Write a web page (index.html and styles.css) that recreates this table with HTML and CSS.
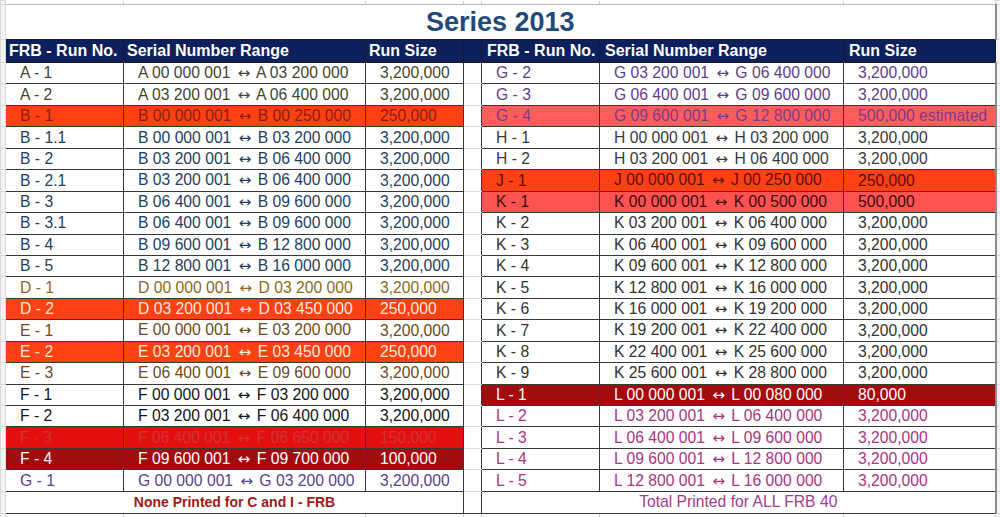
FILE: index.html
```html
<!DOCTYPE html>
<html>
<head>
<meta charset="utf-8">
<link rel="stylesheet" href="styles.css">
</head>
<body>
<table class="sheet">
<colgroup>
<col class="c-lead"><col class="c-run"><col class="c-range"><col class="c-size"><col class="c-gap"><col class="c-run2"><col class="c-range2"><col class="c-size2"><col class="c-trail">
</colgroup>
<tbody>
<tr class="grid-top"><td class="edge"></td><td class="gl"></td><td class="gl"></td><td class="gl"></td><td class="gl"></td><td class="gl"></td><td class="gl"></td><td class="gl"></td><td class="edge"></td></tr>
<tr class="title-row"><td class="edge"></td><td class="title" colspan="7">Series 2013</td><td class="edge"></td></tr>
<tr class="head"><td class="edge"></td><td>FRB - Run No.</td><td>Serial Number Range</td><td>Run Size</td><td class="hgap"></td><td class="r1">FRB - Run No.</td><td class="r1">Serial Number Range</td><td class="r1">Run Size</td><td class="edge"></td></tr>

<tr class="row"><td class="edge"></td><td class="t-a">A - 1</td><td class="t-a">A 00 000 001 <span class="arr">↔</span> A 03 200 000</td><td class="t-a">3,200,000</td><td class="gap"></td><td class="t-g">G - 2</td><td class="t-g">G 03 200 001 <span class="arr">↔</span> G 06 400 000</td><td class="t-g">3,200,000</td><td class="edge"></td></tr>
<tr class="row"><td class="edge"></td><td class="t-a">A - 2</td><td class="t-a">A 03 200 001 <span class="arr">↔</span> A 06 400 000</td><td class="t-a">3,200,000</td><td class="gap"></td><td class="t-g">G - 3</td><td class="t-g">G 06 400 001 <span class="arr">↔</span> G 09 600 000</td><td class="t-g">3,200,000</td><td class="edge"></td></tr>
<tr class="row"><td class="edge"></td><td class="hl-orange t-dred">B - 1</td><td class="hl-orange t-dred">B 00 000 001 <span class="arr">↔</span> B 00 250 000</td><td class="hl-orange t-dred">250,000</td><td class="gap"></td><td class="hl-salmon t-gp">G - 4</td><td class="hl-salmon t-gp">G 09 600 001 <span class="arr">↔</span> G 12 800 000</td><td class="hl-salmon t-gp">500,000 estimated</td><td class="edge"></td></tr>
<tr class="row"><td class="edge"></td><td class="t-b">B - 1.1</td><td class="t-b">B 00 000 001 <span class="arr">↔</span> B 03 200 000</td><td class="t-b">3,200,000</td><td class="gap"></td><td class="t-h">H - 1</td><td class="t-h">H 00 000 001 <span class="arr">↔</span> H 03 200 000</td><td class="t-h">3,200,000</td><td class="edge"></td></tr>
<tr class="row"><td class="edge"></td><td class="t-b">B - 2</td><td class="t-b">B 03 200 001 <span class="arr">↔</span> B 06 400 000</td><td class="t-b">3,200,000</td><td class="gap"></td><td class="t-h">H - 2</td><td class="t-h">H 03 200 001 <span class="arr">↔</span> H 06 400 000</td><td class="t-h">3,200,000</td><td class="edge"></td></tr>
<tr class="row"><td class="edge"></td><td class="t-b">B - 2.1</td><td class="t-b">B 03 200 001 <span class="arr">↔</span> B 06 400 000</td><td class="t-b">3,200,000</td><td class="gap"></td><td class="hl-orange t-jd">J - 1</td><td class="hl-orange t-jd">J 00 000 001 <span class="arr">↔</span> J 00 250 000</td><td class="hl-orange t-jd">250,000</td><td class="edge"></td></tr>
<tr class="row"><td class="edge"></td><td class="t-b">B - 3</td><td class="t-b">B 06 400 001 <span class="arr">↔</span> B 09 600 000</td><td class="t-b">3,200,000</td><td class="gap"></td><td class="hl-pink t-kd">K - 1</td><td class="hl-pink t-kd">K 00 000 001 <span class="arr">↔</span> K 00 500 000</td><td class="hl-pink t-kd">500,000</td><td class="edge"></td></tr>
<tr class="row"><td class="edge"></td><td class="t-b">B - 3.1</td><td class="t-b">B 06 400 001 <span class="arr">↔</span> B 09 600 000</td><td class="t-b">3,200,000</td><td class="gap"></td><td class="t-k">K - 2</td><td class="t-k">K 03 200 001 <span class="arr">↔</span> K 06 400 000</td><td class="t-k">3,200,000</td><td class="edge"></td></tr>
<tr class="row"><td class="edge"></td><td class="t-b">B - 4</td><td class="t-b">B 09 600 001 <span class="arr">↔</span> B 12 800 000</td><td class="t-b">3,200,000</td><td class="gap"></td><td class="t-k">K - 3</td><td class="t-k">K 06 400 001 <span class="arr">↔</span> K 09 600 000</td><td class="t-k">3,200,000</td><td class="edge"></td></tr>
<tr class="row"><td class="edge"></td><td class="t-b">B - 5</td><td class="t-b">B 12 800 001 <span class="arr">↔</span> B 16 000 000</td><td class="t-b">3,200,000</td><td class="gap"></td><td class="t-k">K - 4</td><td class="t-k">K 09 600 001 <span class="arr">↔</span> K 12 800 000</td><td class="t-k">3,200,000</td><td class="edge"></td></tr>
<tr class="row"><td class="edge"></td><td class="t-d">D - 1</td><td class="t-d">D 00 000 001 <span class="arr">↔</span> D 03 200 000</td><td class="t-d">3,200,000</td><td class="gap"></td><td class="t-k">K - 5</td><td class="t-k">K 12 800 001 <span class="arr">↔</span> K 16 000 000</td><td class="t-k">3,200,000</td><td class="edge"></td></tr>
<tr class="row"><td class="edge"></td><td class="hl-orange t-cream">D - 2</td><td class="hl-orange t-cream">D 03 200 001 <span class="arr">↔</span> D 03 450 000</td><td class="hl-orange t-cream">250,000</td><td class="gap"></td><td class="t-k">K - 6</td><td class="t-k">K 16 000 001 <span class="arr">↔</span> K 19 200 000</td><td class="t-k">3,200,000</td><td class="edge"></td></tr>
<tr class="row"><td class="edge"></td><td class="t-e">E - 1</td><td class="t-e">E 00 000 001 <span class="arr">↔</span> E 03 200 000</td><td class="t-e">3,200,000</td><td class="gap"></td><td class="t-k">K - 7</td><td class="t-k">K 19 200 001 <span class="arr">↔</span> K 22 400 000</td><td class="t-k">3,200,000</td><td class="edge"></td></tr>
<tr class="row"><td class="edge"></td><td class="hl-orange t-cream">E - 2</td><td class="hl-orange t-cream">E 03 200 001 <span class="arr">↔</span> E 03 450 000</td><td class="hl-orange t-cream">250,000</td><td class="gap"></td><td class="t-k">K - 8</td><td class="t-k">K 22 400 001 <span class="arr">↔</span> K 25 600 000</td><td class="t-k">3,200,000</td><td class="edge"></td></tr>
<tr class="row"><td class="edge"></td><td class="t-e">E - 3</td><td class="t-e">E 06 400 001 <span class="arr">↔</span> E 09 600 000</td><td class="t-e">3,200,000</td><td class="gap"></td><td class="t-k">K - 9</td><td class="t-k">K 25 600 001 <span class="arr">↔</span> K 28 800 000</td><td class="t-k">3,200,000</td><td class="edge"></td></tr>
<tr class="row"><td class="edge"></td><td class="t-f">F - 1</td><td class="t-f">F 00 000 001 <span class="arr">↔</span> F 03 200 000</td><td class="t-f">3,200,000</td><td class="gap"></td><td class="hl-maroon t-white">L - 1</td><td class="hl-maroon t-white">L 00 000 001 <span class="arr">↔</span> L 00 080 000</td><td class="hl-maroon t-white">80,000</td><td class="edge"></td></tr>
<tr class="row"><td class="edge"></td><td class="t-f">F - 2</td><td class="t-f">F 03 200 001 <span class="arr">↔</span> F 06 400 000</td><td class="t-f">3,200,000</td><td class="gap"></td><td class="t-l">L - 2</td><td class="t-l">L 03 200 001 <span class="arr">↔</span> L 06 400 000</td><td class="t-l">3,200,000</td><td class="edge"></td></tr>
<tr class="row"><td class="edge"></td><td class="hl-red t-faint">F - 3</td><td class="hl-red t-faint">F 06 400 001 <span class="arr">↔</span> F 06 650 000</td><td class="hl-red t-faint">150,000</td><td class="gap"></td><td class="t-l">L - 3</td><td class="t-l">L 06 400 001 <span class="arr">↔</span> L 09 600 000</td><td class="t-l">3,200,000</td><td class="edge"></td></tr>
<tr class="row"><td class="edge"></td><td class="hl-maroon t-white">F - 4</td><td class="hl-maroon t-white">F 09 600 001 <span class="arr">↔</span> F 09 700 000</td><td class="hl-maroon t-white">100,000</td><td class="gap"></td><td class="t-l">L - 4</td><td class="t-l">L 09 600 001 <span class="arr">↔</span> L 12 800 000</td><td class="t-l">3,200,000</td><td class="edge"></td></tr>
<tr class="row"><td class="edge"></td><td class="t-g">G - 1</td><td class="t-g">G 00 000 001 <span class="arr">↔</span> G 03 200 000</td><td class="t-g">3,200,000</td><td class="gap"></td><td class="t-l">L - 5</td><td class="t-l">L 12 800 001 <span class="arr">↔</span> L 16 000 000</td><td class="t-l">3,200,000</td><td class="edge"></td></tr>

<tr class="foot"><td class="edge"></td><td class="note" colspan="3">None Printed for C and I - FRB</td><td class="gap"></td><td class="total" colspan="3">Total Printed for ALL FRB 40</td><td class="edge"></td></tr>
<tr class="grid-bottom"><td class="edge"></td><td class="gl"></td><td class="gl"></td><td class="gl"></td><td class="gl"></td><td class="gl"></td><td class="gl"></td><td class="gl"></td><td class="edge"></td></tr>
</tbody>
</table>
</body>
</html>
```

FILE: styles.css
```css
html, body {
  margin: 0;
  padding: 0;
  background: #ffffff;
}

body {
  font-family: "Liberation Sans", Arial, sans-serif;
  overflow: hidden;
}

.sheet {
  border-collapse: collapse;
  table-layout: fixed;
  width: 1000px;
}

.c-lead { width: 5px; }
.c-run { width: 118px; }
.c-range { width: 242px; }
.c-size { width: 98px; }
.c-gap { width: 18px; }
.c-run2 { width: 118px; }
.c-range2 { width: 244px; }
.c-size2 { width: 152px; }
.c-trail { width: 5px; }

td {
  padding: 0 0 0 14px;
  border: 1px solid #383838;
  white-space: nowrap;
  overflow: hidden;
  font-size: 15.7px;
  line-height: 1;
  text-align: left;
  vertical-align: middle;
}

.arr {
  font-family: "DejaVu Sans", sans-serif;
  font-size: 15px;
  margin: 0 2px 0 3px;
}

td.edge {
  padding: 0;
  border: 1px solid #d9d9d9;
  background: #f4f4f4;
}

td.gl {
  padding: 0;
  border-left: 1px solid #cfcfcf;
  border-right: 1px solid #cfcfcf;
  border-top: none;
  border-bottom: 1px solid #b8b8b8;
}

.grid-top td { height: 3px; }
.grid-bottom td { height: 4px; }

.title-row td { height: 34px; }

td.title {
  padding: 0;
  text-align: center;
  font-weight: bold;
  font-size: 27px;
  color: #1f4a7a;
  border-left: 1px solid #a0a0a0;
  border-right: 2px solid #8a8a8a;
  border-top: 1px solid #c8c8c8;
  border-bottom: 1px solid #1a1a1a;
}

.head td {
  height: 22px;
  background: #0d1f5c;
  color: #ffffff;
  font-weight: bold;
  font-size: 16px;
  padding-left: 3px;
  border-color: #1a1a2a;
}

.head td.r1 { padding-left: 5px; }
.head td.hgap { padding: 0; }
.head td.edge { background: #f4f4f4; border-color: #d9d9d9; }

.row td { height: 20.45px; }

td.gap {
  padding: 0;
  background: #ffffff;
  border-top: 1px solid #dadada;
  border-bottom: 1px solid #dadada;
  border-left: 1px solid #383838;
  border-right: 1px solid #383838;
}

.foot td { height: 21px; }

td.note {
  padding: 0;
  text-align: center;
  font-weight: bold;
  font-size: 14px;
  color: #a31818;
  border-right: 1px solid #383838;
}

td.total {
  padding: 0;
  text-align: center;
  color: #a23c8c;
  border-right: 2px solid #8a8a8a;
}

.foot td.gap {
  border-bottom: 1px solid #383838;
}

/* text colours */
.t-a { color: #45452c; }
.t-b { color: #233f5e; }
.t-d { color: #8c6a18; }
.t-e { color: #6b4b22; }
.t-f { color: #141414; }
.t-g { color: #5e3d8e; }
.t-gp { color: #7d3a8a; }
.t-h { color: #3a3a3a; }
.t-k { color: #333333; }
.t-l { color: #ac347e; }
.t-dred { color: #8a1e12; }
.t-jd { color: #5e0c0a; }
.t-kd { color: #3c0c0c; }
.t-cream { color: #fde8dc; }
.t-white { color: #ffffff; }
.t-faint { color: #cc3434; }

/* highlighted fills */
.hl-orange { background: #fd4112; }
.hl-salmon { background: #ff5c5c; }
.hl-pink { background: #ff5252; }
.hl-red { background: #e60f0f; }
.hl-maroon { background: #a30c0c; }

.row td:nth-child(8) { border-right: 2px solid #8a8a8a; }
```
